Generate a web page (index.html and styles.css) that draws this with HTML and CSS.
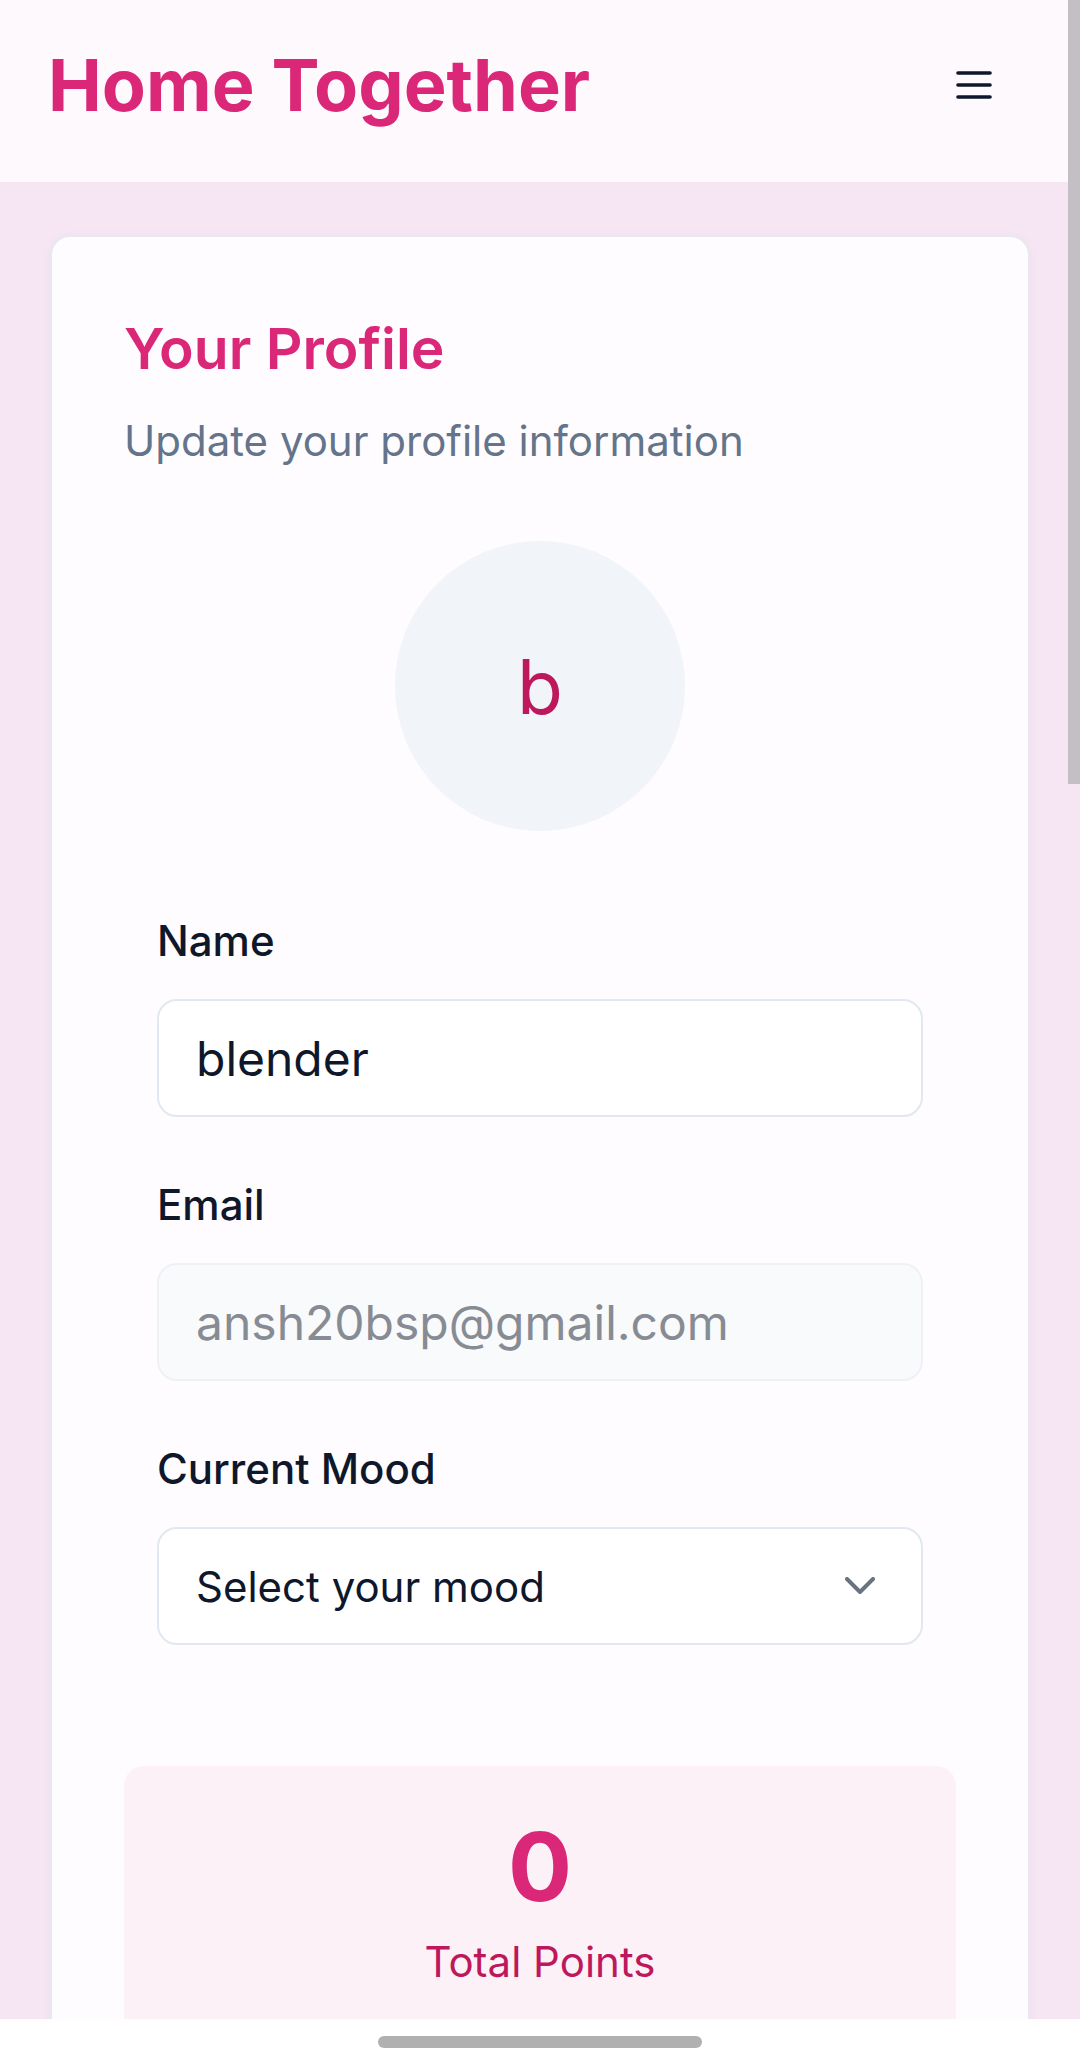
FILE: index.html
```html
<!DOCTYPE html>
<html lang="en">
<head>
    <meta charset="UTF-8">
    <meta name="viewport" content="width=device-width, initial-scale=1.0">
    <title>Home Together - Your Profile</title>
    <link rel="stylesheet" href="styles.css">
</head>
<body>
    <header class="topbar">
        <h1 class="brand">Home Together</h1>
        <button class="menu-btn" type="button" aria-label="Open menu">
            <svg width="36" height="28" viewBox="0 0 36 28" fill="none" stroke="#0f172a" stroke-width="3.6" stroke-linecap="round">
                <line x1="2" y1="2" x2="34" y2="2"/>
                <line x1="2" y1="14" x2="34" y2="14"/>
                <line x1="2" y1="26" x2="34" y2="26"/>
            </svg>
        </button>
    </header>

    <main class="page">
        <section class="card">
            <div class="card-head">
                <h2>Your Profile</h2>
                <p>Update your profile information</p>
            </div>

            <div class="avatar">b</div>

            <form class="profile-form">
                <div class="field">
                    <label for="name">Name</label>
                    <input id="name" type="text" value="blender">
                </div>
                <div class="field">
                    <label for="email">Email</label>
                    <input id="email" type="email" value="ansh20bsp@gmail.com" disabled>
                </div>
                <div class="field">
                    <label for="mood">Current Mood</label>
                    <div class="select-wrap">
                        <select id="mood">
                            <option>Select your mood</option>
                        </select>
                        <svg class="chevron" width="30" height="17" viewBox="0 0 30 17" fill="none" stroke="#6b7280" stroke-width="4" stroke-linecap="round" stroke-linejoin="round">
                            <polyline points="2,2 15,15 28,2"/>
                        </svg>
                    </div>
                </div>
            </form>

            <div class="points">
                <div class="points-value">0</div>
                <div class="points-label">Total Points</div>
            </div>
        </section>
    </main>

    <div class="scroll-thumb"></div>
    <div class="gesture-bar"><span class="pill"></span></div>
</body>
</html>
```

FILE: styles.css
```css
* {
    margin: 0;
    padding: 0;
    box-sizing: border-box;
}
html, body {
    height: 2064px;
    overflow: hidden;
}
body {
    font-family: 'Inter', 'Noto Sans', sans-serif;
    background-color: #f6e6f4;
    color: #0f172a;
}
.topbar {
    height: 182px;
    background-color: #fdf9fd;
    display: flex;
    align-items: center;
    justify-content: space-between;
    padding: 0 88px 12px 48px;
}
.brand {
    font-size: 72px;
    font-weight: 700;
    line-height: 90px;
    color: #db2777;
}
.menu-btn {
    border: none;
    background: none;
    display: flex;
    width: 36px;
    height: 28px;
}
.page {
    padding: 53px 50px 0;
}
.card {
    background-color: #fefcfe;
    border: 2px solid #e5e9f0;
    border-radius: 20px;
    padding: 72px 72px 0;
    box-shadow: 0 2px 10px rgba(120, 80, 120, 0.06);
}
.card-head h2 {
    font-size: 57px;
    font-weight: 600;
    line-height: 80px;
    color: #db2777;
}
.card-head p {
    margin-top: 22px;
    font-size: 42px;
    line-height: 60px;
    color: #64748b;
}
.avatar {
    width: 290px;
    height: 290px;
    margin: 70px auto 0;
    border-radius: 50%;
    background-color: #f1f4f9;
    color: #be185d;
    font-size: 75px;
    display: flex;
    align-items: center;
    justify-content: center;
}
.profile-form {
    margin: 80px 33px 0;
    display: flex;
    flex-direction: column;
    gap: 58px;
}
.field {
    display: flex;
    flex-direction: column;
    gap: 28px;
}
.field label {
    font-size: 42px;
    font-weight: 500;
    line-height: 60px;
    color: #0f172a;
}
.field input,
.field select {
    width: 100%;
    height: 118px;
    border: 2.5px solid #e2e8f0;
    border-radius: 20px;
    padding: 0 37px;
    font-family: inherit;
    font-size: 48px;
    color: #0f172a;
    background-color: #ffffff;
    outline: none;
}
.field input:disabled {
    background-color: #f8fafc;
    border-color: #eef2f6;
    color: #878b93;
}
.select-wrap {
    position: relative;
}
.field select {
    appearance: none;
    -webkit-appearance: none;
    font-size: 42px;
}
.chevron {
    position: absolute;
    right: 48px;
    top: 50px;
    pointer-events: none;
}
.points {
    margin-top: 121px;
    background-color: #fdf1f8;
    border-radius: 20px;
    padding: 53px 0 120px;
    text-align: center;
}
.points-value {
    font-size: 95px;
    font-weight: 700;
    line-height: 95px;
    color: #db2777;
}
.points-label {
    margin-top: 18px;
    font-size: 42px;
    line-height: 60px;
    color: #be185d;
}
.scroll-thumb {
    position: fixed;
    top: 0;
    right: 0;
    width: 12px;
    height: 784px;
    background-color: #c4bfc4;
}
.gesture-bar {
    position: fixed;
    left: 0;
    right: 0;
    bottom: 0;
    height: 45px;
    background-color: #ffffff;
    display: flex;
    justify-content: center;
    padding-top: 17px;
}
.pill {
    width: 324px;
    height: 12px;
    border-radius: 6px;
    background-color: #b0b0b0;
}
```
